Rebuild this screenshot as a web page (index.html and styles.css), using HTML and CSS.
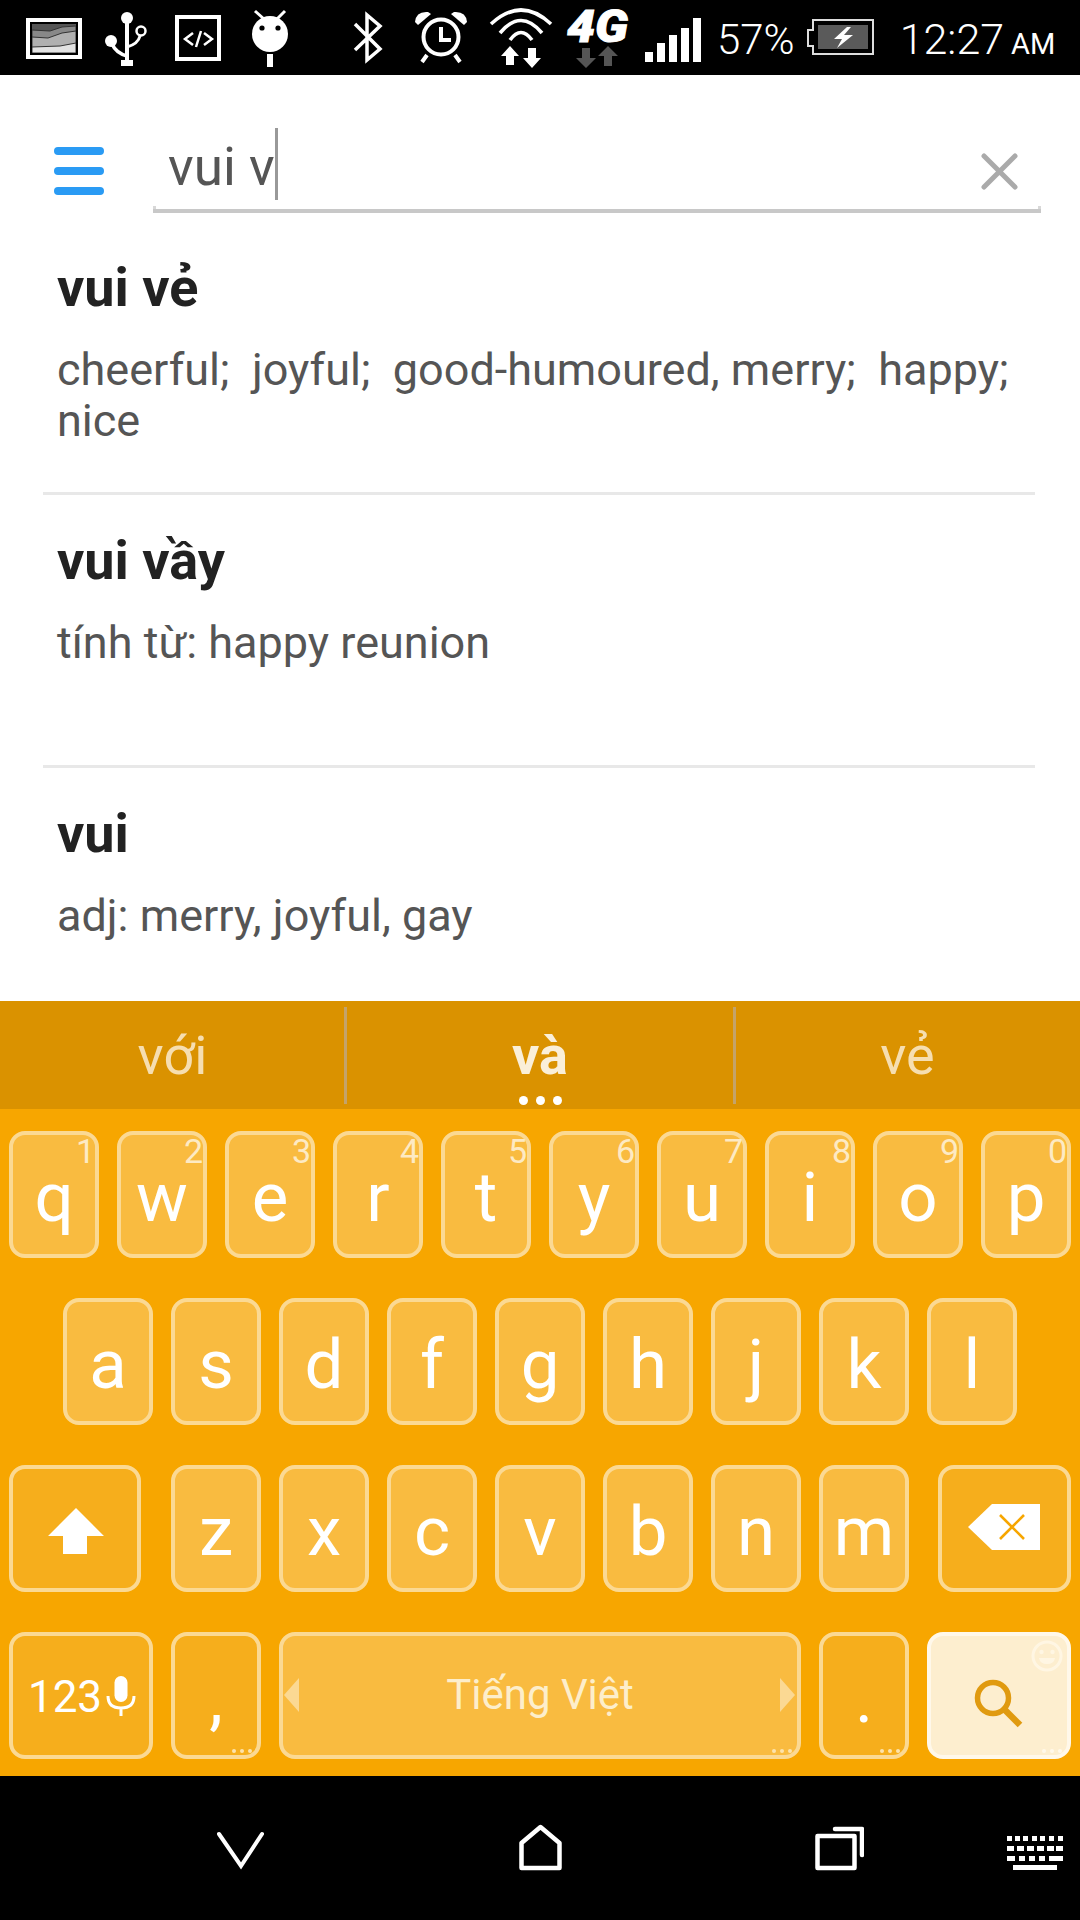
FILE: index.html
```html
<!DOCTYPE html>
<html lang="vi">
<head>
<meta charset="utf-8">
<title>Từ điển</title>
<link rel="stylesheet" href="styles.css">
</head>
<body>
<div class="app">
  <header class="status">
    <svg class="si i-img" width="56" height="75" viewBox="26 0 56 75">
      <defs><clipPath id="pic"><rect x="32" y="24" width="44" height="29"/></clipPath></defs>
      <rect x="26" y="18" width="56" height="41" fill="#fff"/>
      <rect x="30" y="22" width="48" height="33" fill="#000"/>
      <g clip-path="url(#pic)">
        <rect x="32" y="24" width="44" height="29" fill="#555"/>
        <path d="M32 30 L50 31 L62 27 L76 26 V53 H32Z" fill="#888" stroke="#333"/>
        <path d="M32 37 L48 38 L62 33 L76 31 V53 H32Z" fill="#b0b0b0" stroke="#333"/>
        <path d="M32 47 L60 46 L76 43 V53 H32Z" fill="#e2e2e2" stroke="#333"/>
      </g>
    </svg>
    <svg class="si i-usb" width="42" height="75" viewBox="105 0 42 75" fill="none" stroke="#fff">
      <path d="M127 18 V62" stroke-width="4"/>
      <circle cx="127" cy="18" r="6" fill="#fff" stroke="none"/>
      <rect x="121" y="60" width="12" height="6" fill="#fff" stroke="none"/>
      <circle cx="111" cy="41" r="6" fill="#fff" stroke="none"/>
      <path d="M112 44 Q116 53 127 56" stroke-width="3.5"/>
      <circle cx="141" cy="31" r="4.5" stroke-width="2.5"/>
      <path d="M140 36 Q138 44 127 47" stroke-width="3"/>
    </svg>
    <svg class="si i-code" width="46" height="75" viewBox="175 0 46 75" fill="none" stroke="#fff">
      <rect x="177" y="17" width="42" height="42" stroke-width="4"/>
      <path d="M193 33 L185 39 L193 45 M204 33 L212 39 L204 45 M201 31 L196 47" stroke-width="2.5"/>
    </svg>
    <svg class="si i-droid" width="37" height="75" viewBox="252 0 37 75">
      <circle cx="270" cy="34" r="18" fill="#fff"/>
      <path d="M264 19 L255 11 M277 19 L285 11" stroke="#fff" stroke-width="3"/>
      <circle cx="262" cy="28" r="2.6" fill="#000"/>
      <circle cx="278" cy="28" r="2.6" fill="#000"/>
      <rect x="267" y="54" width="6" height="13" fill="#fff"/>
    </svg>
    <svg class="si i-bt" width="30" height="75" viewBox="353 0 30 75" fill="none" stroke="#fff" stroke-width="3.5">
      <path d="M355 24 L380 49 L367 60 V15 L380 26 L355 50"/>
    </svg>
    <svg class="si i-alarm" width="52" height="75" viewBox="415 0 52 75" fill="none" stroke="#fff">
      <circle cx="441" cy="37" r="17.5" stroke-width="4"/>
      <path d="M441 27 V40 H451 M427 55 L422 62 M455 55 L460 62" stroke-width="4"/>
      <path d="M415 22 Q416 11 428 12 L431 14 L418 25 Z" fill="#fff" stroke="none"/>
      <path d="M467 22 Q466 11 454 12 L451 14 L464 25 Z" fill="#fff" stroke="none"/>
    </svg>
    <svg class="si i-wifi" width="62" height="75" viewBox="490 0 62 75" fill="none" stroke="#fff" stroke-width="3.6">
      <path d="M491 24 Q521 -4 551 24"/>
      <path d="M500 33 Q521 8 542 33"/>
      <path d="M510 40 Q521 25 532 40"/>
      <path d="M510 46 L519 56 H514 V65 H506 V56 H501Z M532 68 L541 58 H536 V48 H528 V58 H523Z" fill="#fff" stroke="none"/>
    </svg>
    <svg class="si i-4g" width="62" height="75" viewBox="567 0 62 75">
      <text class="fourg" x="567" y="42" textLength="61" lengthAdjust="spacingAndGlyphs">4G</text>
      <path d="M586 68 L596 58 H590 V48 H582 V58 H576Z M608 46 L618 56 H612 V66 H604 V56 H598Z" fill="#555"/>
    </svg>
    <svg class="si i-sig" width="56" height="75" viewBox="645 0 56 75" fill="#fff">
      <rect x="645" y="52" width="8" height="10"/>
      <rect x="657" y="43" width="8" height="19"/>
      <rect x="669" y="35" width="8" height="27"/>
      <rect x="681" y="28" width="8" height="34"/>
      <rect x="693" y="18" width="8" height="44"/>
    </svg>
    <span class="pct">57%</span>
    <svg class="si i-bat" width="67" height="75" viewBox="807 0 67 75">
      <path d="M813 20 H873 V54 H813 V46 H808 V30 H813Z" fill="none" stroke="#ddd" stroke-width="2"/>
      <rect x="818" y="25" width="50" height="24" fill="#5a5a5a"/>
      <path d="M847 27 L834 39 H842 L837 48 L853 35 H844 L851 27Z" fill="#fff"/>
    </svg>
    <span class="clock">12:27</span>
    <span class="ampm">AM</span>
  </header>

  <section class="search">
    <svg class="burger" width="50" height="48" viewBox="0 0 50 48" fill="#2a9bf4">
      <rect y="0" width="50" height="8" rx="4"/>
      <rect y="20" width="50" height="8" rx="4"/>
      <rect y="40" width="50" height="8" rx="4"/>
    </svg>
    <div class="field">
      <span class="query">vui v</span><span class="caret"></span>
      <svg class="clear" width="37" height="37" viewBox="0 0 37 37" stroke="#aaa" stroke-width="5" stroke-linecap="round">
        <path d="M3 3 L34 34 M34 3 L3 34"/>
      </svg>
    </div>
  </section>

  <main class="results">
    <article class="entry">
      <h2 class="word">vui vẻ</h2>
      <p class="meaning">cheerful;  joyful;  good-humoured, merry;  happy; nice</p>
    </article>
    <article class="entry">
      <h2 class="word">vui vầy</h2>
      <p class="meaning">tính từ: happy reunion</p>
    </article>
    <article class="entry">
      <h2 class="word">vui</h2>
      <p class="meaning">adj: merry, joyful, gay</p>
    </article>
  </main>

  <section class="keyboard">
    <div class="suggest">
      <div class="sg sg-side">với</div>
      <div class="sg sg-main">và<span class="sg-dots"><i></i><i></i><i></i></span></div>
      <div class="sg sg-side">vẻ</div>
    </div>
    <div class="keys">
      <div class="row">
        <div class="key">q<sup class="hint">1</sup></div>
        <div class="key">w<sup class="hint">2</sup></div>
        <div class="key">e<sup class="hint">3</sup></div>
        <div class="key">r<sup class="hint">4</sup></div>
        <div class="key">t<sup class="hint">5</sup></div>
        <div class="key">y<sup class="hint">6</sup></div>
        <div class="key">u<sup class="hint">7</sup></div>
        <div class="key">i<sup class="hint">8</sup></div>
        <div class="key">o<sup class="hint">9</sup></div>
        <div class="key">p<sup class="hint">0</sup></div>
      </div>
      <div class="row">
        <div class="key">a</div><div class="key">s</div><div class="key">d</div>
        <div class="key">f</div><div class="key">g</div><div class="key">h</div>
        <div class="key">j</div><div class="key">k</div><div class="key">l</div>
      </div>
      <div class="row">
        <div class="key fn shift">
          <svg width="56" height="46" viewBox="0 0 56 46" fill="#fff"><path d="M28 0 L56 28 H39 V46 H15 V28 H0Z"/></svg>
        </div>
        <div class="key">z</div><div class="key">x</div><div class="key">c</div>
        <div class="key">v</div><div class="key">b</div><div class="key">n</div><div class="key">m</div>
        <div class="key fn del">
          <svg width="72" height="46" viewBox="0 0 72 46"><path d="M24 0 H72 V46 H24 L0 23Z" fill="#fff"/><path d="M32 11 L56 35 M56 11 L32 35" stroke="#f7a600" stroke-width="2.6"/></svg>
        </div>
      </div>
      <div class="row">
        <div class="key fn num">
          <span class="num-t">123</span>
          <svg width="30" height="40" viewBox="0 0 30 40" fill="none" stroke="#fff" stroke-width="3"><rect x="8.5" y="0" width="13" height="26" rx="6.5" fill="#fff" stroke="none"/><path d="M2 20 Q2 32 15 32 Q28 32 28 20 M15 32 V40"/></svg>
        </div>
        <div class="key fn">,<span class="more"><i></i><i></i><i></i></span></div>
        <div class="key space">
          <span class="arrow arrow-l"></span>
          <span class="lang">Tiếng Việt</span>
          <span class="arrow arrow-r"></span>
          <span class="more"><i></i><i></i><i></i></span>
        </div>
        <div class="key fn">.<span class="more"><i></i><i></i><i></i></span></div>
        <div class="key go">
          <svg class="glass" width="56" height="56" viewBox="0 0 56 56" fill="none" stroke="#e09a10"><circle cx="20" cy="20" r="15.5" stroke-width="5.5"/><path d="M31 31 L47 47" stroke-width="6.5"/></svg>
          <svg class="smile" width="32" height="32" viewBox="0 0 32 32" fill="none" stroke="#fff6e3" stroke-width="3"><circle cx="16" cy="16" r="14"/><circle cx="10.5" cy="12" r="2.2" fill="#fff6e3" stroke="none"/><circle cx="21.5" cy="12" r="2.2" fill="#fff6e3" stroke="none"/><path d="M8 18 H24 Q23 24 16 24 Q9 24 8 18Z" fill="#fff6e3" stroke="none"/></svg>
          <span class="more"><i></i><i></i><i></i></span>
        </div>
      </div>
    </div>
  </section>

  <nav class="navbar">
    <svg class="n-back" width="47" height="144" viewBox="217 0 47 144" fill="none" stroke="#fff" stroke-width="4" stroke-linecap="round"><path d="M219 58 L241 90 L262 58"/></svg>
    <svg class="n-home" width="43" height="144" viewBox="519 0 43 144" fill="none" stroke="#fff" stroke-width="4.5" stroke-linejoin="round"><path d="M540.5 51 L559.5 67 V92 H521.5 V67Z"/></svg>
    <svg class="n-rec" width="49" height="144" viewBox="815 0 49 144" fill="none" stroke="#fff" stroke-width="4.5" stroke-linejoin="round"><rect x="817.5" y="60" width="37" height="32"/><path d="M835 53 H862 V79" stroke-linecap="round"/></svg>
    <svg class="n-kb" width="56" height="144" viewBox="1007 0 56 144" fill="#fff">
      <path d="M1007 60 h5 v5 h-5z M1015 60 h5 v5 h-5z M1023 60 h5 v5 h-5z M1032 60 h5 v5 h-5z M1040 60 h5 v5 h-5z M1049 60 h5 v5 h-5z M1058 60 h5 v5 h-5z"/>
      <path d="M1007 70 h7 v5 h-7z M1017 70 h7 v5 h-7z M1027 70 h7 v5 h-7z M1037 70 h7 v5 h-7z M1047 70 h7 v5 h-7z M1056 70 h7 v5 h-7z"/>
      <path d="M1007 80 h8 v5 h-8z M1019 80 h6 v5 h-6z M1029 80 h6 v5 h-6z M1039 80 h6 v5 h-6z M1049 80 h14 v5 h-14z"/>
      <rect x="1013" y="89" width="44" height="5"/>
    </svg>
  </nav>
</div>
</body>
</html>
```
FILE: styles.css
```css
* { box-sizing: border-box; }
html, body { margin: 0; padding: 0; background: #fff; }
body { font-family: Roboto, "Noto Sans", sans-serif; }

.app {
  width: 1080px;
  height: 1920px;
  display: flex;
  flex-direction: column;
  overflow: hidden;
}

/* status bar */
.status {
  flex: 0 0 75px;
  height: 75px;
  min-height: 0;
  background: #000;
  color: #fff;
  display: flex;
  align-items: flex-start;
  padding-left: 26px;
}
.si { display: block; flex: none; overflow: visible; }
.i-usb { margin-left: 23px; }
.i-code { margin-left: 28px; }
.i-droid { margin-left: 31px; }
.i-bt { margin-left: 64px; }
.i-alarm { margin-left: 32px; }
.i-wifi { margin-left: 23px; }
.i-4g { margin-left: 15px; }
.i-sig { margin-left: 16px; }
.i-bat { margin-left: 12px; }
.fourg { font: italic 900 45px Roboto, sans-serif; fill: #fff; stroke: #fff; stroke-width: 1px; }
.pct, .clock {
  font-weight: 300;
  line-height: 79px;
  height: 75px;
}
.pct { font-size: 42px; margin-left: 16px; }
.clock { font-size: 43px; margin-left: 26px; }
.ampm {
  font-weight: 400;
  font-size: 29px;
  line-height: 88px;
  height: 75px;
  margin-left: 7px;
}

/* search */
.search {
  flex: 0 0 147px;
  display: flex;
  align-items: flex-start;
  padding-left: 54px;
}
.burger { margin-top: 72px; flex: none; }
.field {
  position: relative;
  margin-top: 53px;
  margin-left: 49px;
  width: 888px;
  height: 85px;
  display: flex;
  align-items: flex-start;
  padding-left: 15px;
  border-bottom: 4px solid #c8c8c8;
}
.field::before, .field::after {
  content: "";
  position: absolute;
  bottom: 0;
  width: 3px;
  height: 3px;
  background: #d8d8d8;
}
.field::before { left: 0; }
.field::after { right: 0; }
.query {
  font-size: 53px;
  line-height: 79px;
  color: #555;
}
.caret {
  width: 3px;
  height: 72px;
  background: #999;
}
.clear { margin-left: auto; margin-top: 25px; margin-right: 23px; flex: none; }

/* results */
.results {
  flex: 1 1 0;
  min-height: 0;
  overflow: hidden;
  padding: 0 45px 0 43px;
}
.entry {
  height: 273px;
  padding: 36px 14px 0;
  border-bottom: 3px solid #e8e8e8;
}
.word {
  margin: 0;
  font-size: 54px;
  font-weight: 700;
  line-height: 60px;
  color: #222;
}
.meaning {
  margin: 26px 0 0;
  font-size: 45px;
  line-height: 51px;
  color: #555;
  white-space: pre-wrap;
}

/* keyboard */
.keyboard {
  flex: 0 0 775px;
  background: #f7a600;
}
.suggest {
  height: 108px;
  background: #da9200;
  display: flex;
  align-items: stretch;
}
.sg {
  position: relative;
  display: flex;
  align-items: center;
  justify-content: center;
  font-size: 54px;
  line-height: 1;
  padding-top: 2px;
}
.sg-side { flex: 0 0 345px; color: #f6deb0; }
.sg-main {
  flex: 1 1 0;
  color: #faefd8;
  font-weight: 700;
}
.sg-main::before, .sg-main::after {
  content: "";
  position: absolute;
  top: 6px;
  height: 97px;
  width: 3px;
  background: #c4a36a;
}
.sg-main::before { left: -1px; }
.sg-main::after { right: -1px; }
.sg-dots {
  position: absolute;
  left: 0;
  right: 0;
  bottom: 4px;
  display: flex;
  justify-content: center;
  gap: 8px;
}
.sg-dots i {
  display: block;
  width: 9px;
  height: 9px;
  border-radius: 50%;
  background: #fff;
}
.keys {
  padding-top: 22px;
  display: flex;
  flex-direction: column;
  gap: 40px;
}
.row {
  display: flex;
  justify-content: center;
  gap: 18px;
  height: 127px;
}
.key {
  position: relative;
  flex: 0 0 90px;
  height: 127px;
  border: 4px solid #fbd993;
  border-radius: 16px;
  background: #f9bb40;
  color: #fff;
  font-size: 69px;
  line-height: 1;
  display: flex;
  align-items: center;
  justify-content: center;
  padding-top: 6px;
}
.fn { background: #f6ae1c; }
.shift { flex-basis: 132px; margin-right: 12px; padding-top: 4px; padding-left: 2px; }
.del { flex-basis: 133px; margin-left: 11px; padding-top: 0; padding-bottom: 3px; padding-right: 2px; }
.num { flex-basis: 144px; gap: 4px; padding-top: 0; padding-left: 2px; }
.num-t { font-size: 44px; font-weight: 400; margin-top: 3px; }
.space { flex-basis: 522px; }
.go { flex-basis: 144px; background: #fdeecf; border-color: #fff8ea; padding: 0; }
.hint {
  position: absolute;
  top: -1px;
  right: 0;
  font-size: 34px;
  font-weight: 400;
  line-height: 34px;
  color: #fdeac4;
  vertical-align: baseline;
}
.lang {
  font-size: 42px;
  color: #fdeecb;
  margin-top: -7px;
}
.arrow {
  position: absolute;
  top: 42px;
  width: 0;
  height: 0;
  border-style: solid;
  border-color: transparent;
}
.arrow-l { left: 1px; border-width: 17px 15px 17px 0; border-right-color: #fbd993; }
.arrow-r { right: 2px; border-width: 17px 0 17px 15px; border-left-color: #fbd993; }
.more {
  position: absolute;
  right: 5px;
  bottom: 2px;
  display: flex;
  gap: 4px;
}
.more i {
  display: block;
  width: 4px;
  height: 4px;
  border-radius: 50%;
  background: #fde3ad;
}
.go .more i { background: #fff8ea; }
.glass { margin: 20px 0 0 4px; }
.smile { position: absolute; top: 4px; right: 4px; }

/* nav */
.navbar {
  flex: 0 0 144px;
  background: #000;
  display: flex;
  padding-left: 217px;
}
.navbar svg { display: block; flex: none; }
.n-home { margin-left: 255px; }
.n-rec { margin-left: 253px; }
.n-kb { margin-left: 143px; }
```
